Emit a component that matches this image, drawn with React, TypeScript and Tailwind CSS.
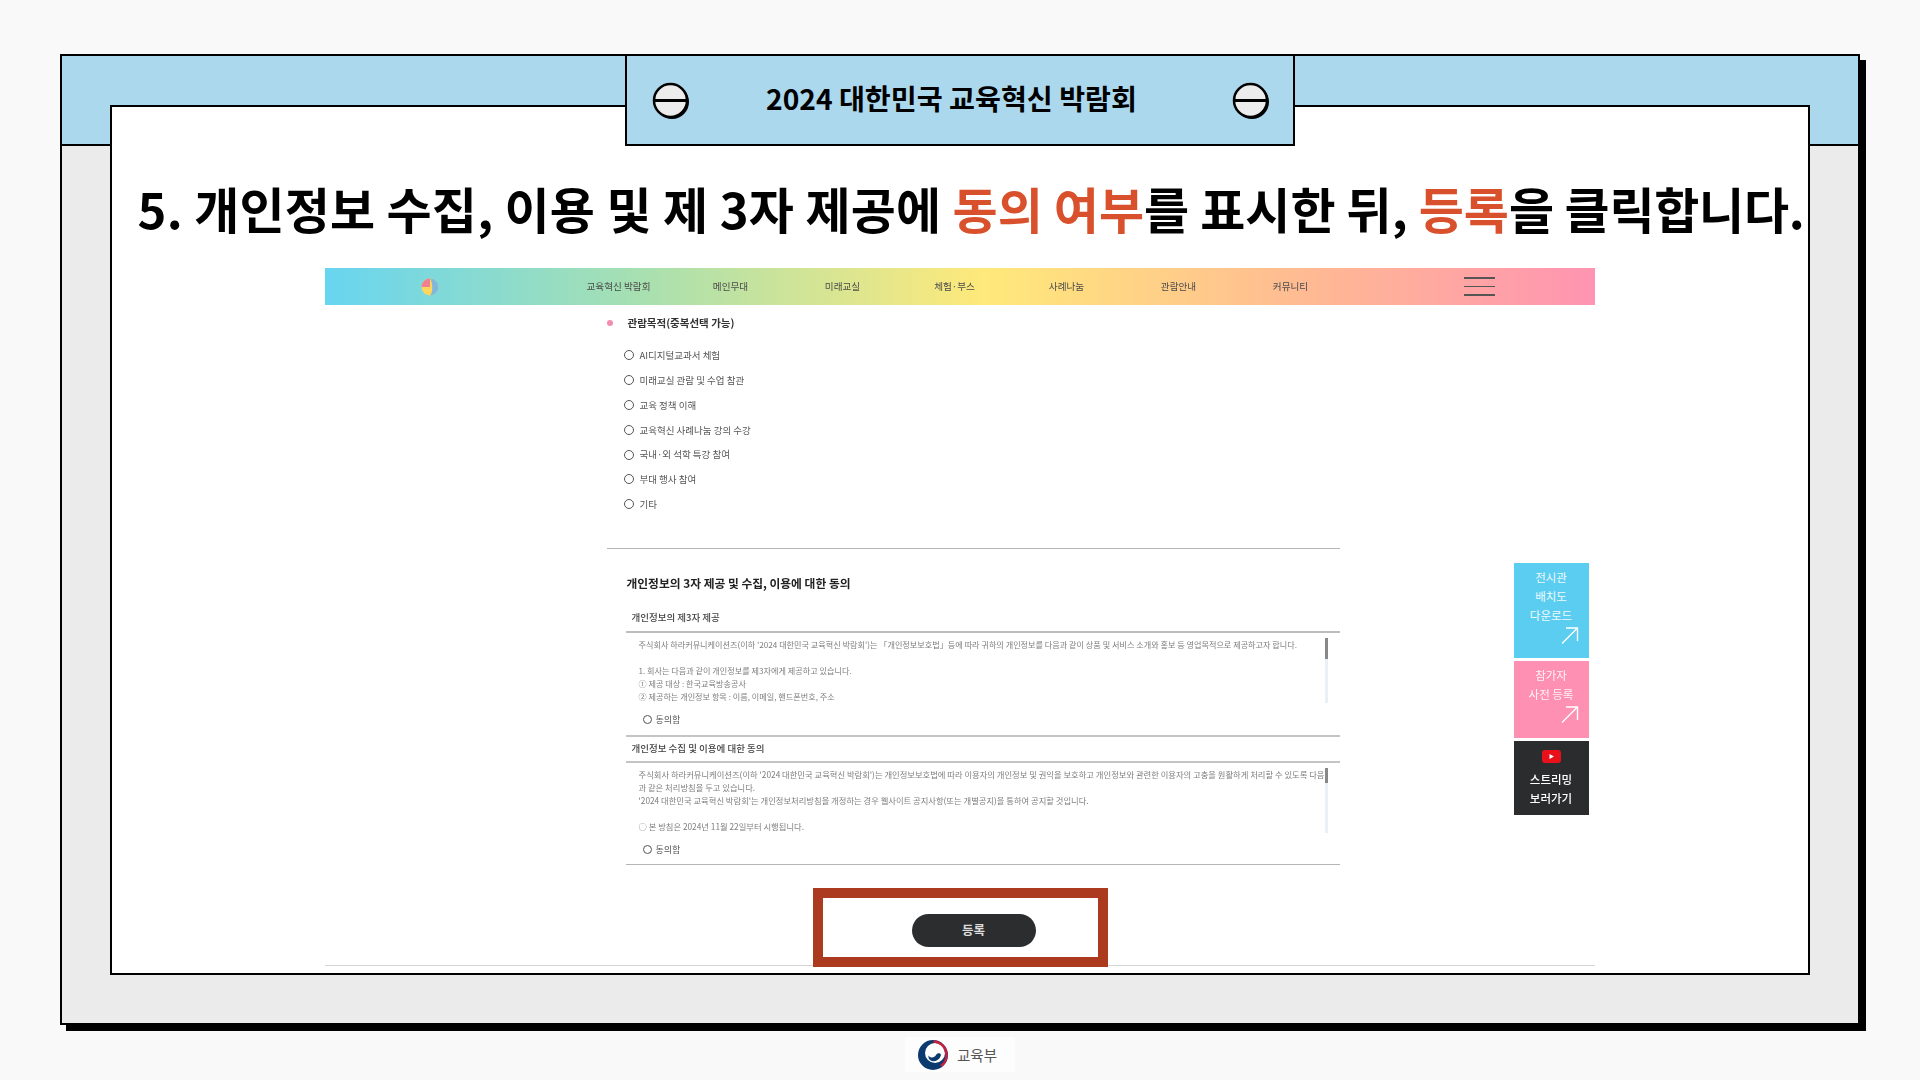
const KR = "font-['Noto_Sans_CJK_KR','Noto_Sans',sans-serif]";

const navItems = ["교육혁신 박람회", "메인무대", "미래교실", "체험·부스", "사례나눔", "관람안내", "커뮤니티"];
const purposes = [
  "AI디지털교과서 체험",
  "미래교실 관람 및 수업 참관",
  "교육 정책 이해",
  "교육혁신 사례나눔 강의 수강",
  "국내·외 석학 특강 참여",
  "부대 행사 참여",
  "기타",
];

function Screw() {
  return (
    <svg width="40" height="40" viewBox="0 0 40 40" className="mt-[2px]">
      <circle cx="21" cy="21" r="17" fill="#000" />
      <circle cx="19.5" cy="19.5" r="16.5" fill="#ececec" stroke="#000" strokeWidth="2.5" />
      <path d="M3 19.5h33" stroke="#000" strokeWidth="3" />
    </svg>
  );
}

function Arrow() {
  return (
    <svg width="18" height="17" viewBox="0 0 18 17" fill="none" stroke="#fff" strokeWidth="1.4" className="ml-auto mr-[10px] mt-[2px]">
      <path d="M1 16.5 16.5 1M5 1h11.5v13" />
    </svg>
  );
}

function Radio({ size }: { size: string }) {
  return <span className={`${size} shrink-0 rounded-full border border-[#555] bg-white`} />;
}

function Agreement({ lines, thumb, size }: { lines: string[]; thumb: string; size: string }) {
  return (
    <div className="flex">
      <div className={`${size} ml-[13px] w-[686px] pt-[5px] leading-[13px] text-[#7d7d7d]`}>
        {lines.map((line, i) => (
          <div key={i} className="h-[13px] whitespace-nowrap">
            {line}
          </div>
        ))}
      </div>
      <div className="mt-[5px] h-[65px] w-[3px] bg-[#eaf0f7]">
        <div className={`${thumb} w-[3px] bg-[#888]`} />
      </div>
    </div>
  );
}

function Agree() {
  return (
    <div className="ml-[17px] mt-[10px] flex h-[14px] items-center gap-[4px] text-[9px] text-[#555]">
      <Radio size="size-[9px]" />
      <span>동의함</span>
    </div>
  );
}

function EduLogo() {
  return (
    <svg width="30" height="32" viewBox="0 0 30 32">
      <circle cx="15" cy="16" r="15" fill="#0b3a6e" />
      <circle cx="17" cy="14" r="10" fill="#fff" />
      <path d="M15.500 2.400A13.700 13.700 0 0 1 23 27" fill="none" stroke="#c8203f" strokeWidth="2.6" />
      <path d="M10.500 16.500c2 3 6 2.500 7.500-.5 1.200-2.200 4-2.200 5-.2-.8 5-6.500 8.300-11 5.200-1.300-1-1.800-3-1.500-4.500Z" fill="#0b3a6e" />
    </svg>
  );
}

export default function App() {
  return (
    <div className={`${KR} flex h-[1080px] w-[1920px] flex-col items-start overflow-hidden bg-[#f9f9f9] pl-[60px] pt-[54px] text-black`}>
      <div className="h-[971px] w-[1800px] shrink-0 border-[2.5px] border-black bg-[#ebebeb] shadow-[6px_6px_0_#000]">
        <div className="flex h-[90px] justify-center border-b-2 border-black bg-[#acd8ee]">
          <div className="relative z-10 flex h-[90px] w-[670px] shrink-0 items-center justify-between border-x-2 border-b-2 border-black bg-[#acd8ee] pl-[24px] pr-[22px]">
            <Screw />
            <span className="mb-[4px] mr-[19px] text-[28.2px] font-bold leading-none">2024 대한민국 교육혁신 박람회</span>
            <Screw />
          </div>
        </div>

        <div className="mx-[47.500px] -mt-[41px] h-[870px] w-[1700px] border-2 border-black bg-white">
          <h1 className="flex h-[161px] items-center justify-center whitespace-nowrap pl-[23px] pt-[40px] text-[49px] font-bold leading-none">
            <span className="tracking-[0.2px]">5. 개인정보 수집, 이용 및 제 3자 제공에&nbsp;</span>
            <span className="text-[#d9512c]">동의 여부</span>를 표시한 뒤,&nbsp;
            <span className="text-[#d9512c]">등록</span>
            <span className="tracking-[-0.25px]">을 클릭합니다.</span>
          </h1>

          <div className="ml-[213px] h-[698px] w-[1270px] border-b border-[#d4d4d4]">
            <nav className="flex h-[37px] items-center bg-[linear-gradient(90deg,#68d5f0_0%,#a8e0b0_25%,#ffe97a_52%,#ffb596_80%,#ff94b2_100%)] blur-[0.3px]">
              <svg width="20" height="20" viewBox="0 0 20 20" className="ml-[95px]">
                <circle cx="10" cy="10" r="8.500" fill="#ffd65c" />
                <path d="M10 1.500a8.500 8.500 0 0 0-8.500 8.500H10Z" fill="#f0808f" />
                <path d="M10 1.500a8.500 8.500 0 0 1 0 17c3-3 3-13 0-17Z" fill="#7fb8dc" />
              </svg>
              <div className="ml-[123px] flex text-[9.6px] text-[#4a4a4a]">
                {navItems.map((item) => (
                  <span key={item} className="w-[112px] whitespace-nowrap text-center">
                    {item}
                  </span>
                ))}
              </div>
              <div className="ml-[117px] flex flex-col gap-[7px]">
                <span className="h-[1.500px] w-[31px] bg-[#555]" />
                <span className="h-[1.500px] w-[31px] bg-[#555]" />
                <span className="h-[1.500px] w-[31px] bg-[#555]" />
              </div>
            </nav>

            <div className="flex">
              <div className="ml-[282px] w-[733px]">
                <div className="blur-[0.3px]">
                  <div className="flex h-[36px] items-center gap-[15px] text-[10.5px] font-bold text-[#333]">
                    <span className="size-[6px] rounded-full bg-[#f28cb0]" />
                    <span>관람목적(중복선택 가능)</span>
                  </div>
                  <ul className="ml-[17px] mt-[2px] text-[9.5px] text-[#555]">
                    {purposes.map((p) => (
                      <li key={p} className="flex h-[24.800px] items-center gap-[6px]">
                        <Radio size="size-[10px]" />
                        {p}
                      </li>
                    ))}
                  </ul>
                  <div className="mt-[31px] h-[1.500px] bg-[#b5b5b5]" />

                  <div className="ml-[19px]">
                    <div className="ml-[1px] mt-[26px] h-[16px] text-[11.750px] font-bold leading-[16px] text-[#222]">
                      개인정보의 3자 제공 및 수집, 이용에 대한 동의
                    </div>
                    <div className="ml-[6px] mt-[17px] h-[18px] text-[9.500px] font-medium leading-[18px] text-[#444]">개인정보의 제3자 제공</div>
                    <div className="mt-[5px] h-[1.500px] bg-[#bdbdbd]" />
                    <Agreement
                      size="text-[8.150px]"
                      thumb="h-[21px]"
                      lines={[
                        "주식회사 하라커뮤니케이션즈(이하 '2024 대한민국 교육혁신 박람회')는 「개인정보보호법」등에 따라 귀하의 개인정보를 다음과 같이 상품 및 서비스 소개와 홍보 등 영업목적으로 제공하고자 합니다.",
                        "",
                        "1. 회사는 다음과 같이 개인정보를 제3자에게 제공하고 있습니다.",
                        "① 제공 대상 : 한국교육방송공사",
                        "② 제공하는 개인정보 항목 : 이름, 이메일, 핸드폰번호, 주소",
                      ]}
                    />
                    <Agree />
                    <div className="mt-[8px] h-[2px] bg-[#c4c4c4]" />
                    <div className="ml-[6px] mt-[2px] h-[18px] text-[9.500px] font-medium leading-[18px] text-[#444]">개인정보 수집 및 이용에 대한 동의</div>
                    <div className="mt-[4px] h-[2px] bg-[#c4c4c4]" />
                    <Agreement
                      size="text-[8.300px]"
                      thumb="h-[15px]"
                      lines={[
                        "주식회사 하라커뮤니케이션즈(이하 '2024 대한민국 교육혁신 박람회')는 개인정보보호법에 따라 이용자의 개인정보 및 권익을 보호하고 개인정보와 관련한 이용자의 고충을 원활하게 처리할 수 있도록 다음",
                        "과 같은 처리방침을 두고 있습니다.",
                        "'2024 대한민국 교육혁신 박람회'는 개인정보처리방침을 개정하는 경우 웹사이트 공지사항(또는 개별공지)을 통하여 공지할 것입니다.",
                        "",
                        "○ 본 방침은 2024년 11월 22일부터 시행됩니다.",
                      ]}
                    />
                    <Agree />
                    <div className="mt-[7px] h-[1.500px] bg-[#b5b5b5]" />
                  </div>
                </div>

                <div className="ml-[206px] mt-[23px] h-[79px] w-[295px] border-[10px] border-[#ab3a1e] bg-white pl-[89px] pt-[16px]">
                  <button className="flex h-[33px] w-[124px] items-center justify-center rounded-full bg-[#2b2d2f] text-[12.500px] font-bold text-[#dddddd]">
                    등록
                  </button>
                </div>
              </div>

              <aside className="ml-[174px] mt-[258px] flex w-[75px] flex-col gap-[3px] text-center text-[11.500px] leading-[19px] text-white blur-[0.3px]">
                <div className="h-[95px] bg-[#5bcdf0] pt-[5px] text-white/90">
                  <div>전시관</div>
                  <div>배치도</div>
                  <div>다운로드</div>
                  <Arrow />
                </div>
                <div className="h-[77px] bg-[#fd90b3] pt-[5px] text-white/90">
                  <div>참가자</div>
                  <div>사전 등록</div>
                  <Arrow />
                </div>
                <div className="flex h-[74px] flex-col items-center bg-[#2a2c2e] pt-[9px] font-medium">
                  <svg width="19" height="13" viewBox="0 0 19 13" className="mb-[7px]">
                    <rect width="19" height="13" rx="3" fill="#e8101a" />
                    <path d="M7.500 4v5l4.500-2.500Z" fill="#fff" />
                  </svg>
                  <div>스트리밍</div>
                  <div>보러가기</div>
                </div>
              </aside>
            </div>
          </div>
        </div>
      </div>

      <div className="ml-[845px] mt-[12px] flex h-[35px] w-[110px] shrink-0 items-center gap-[9px] bg-[#fdfdfd] pl-[13px] text-[14.500px] text-[#555]">
        <EduLogo />
        <span>교육부</span>
      </div>
    </div>
  );
}
